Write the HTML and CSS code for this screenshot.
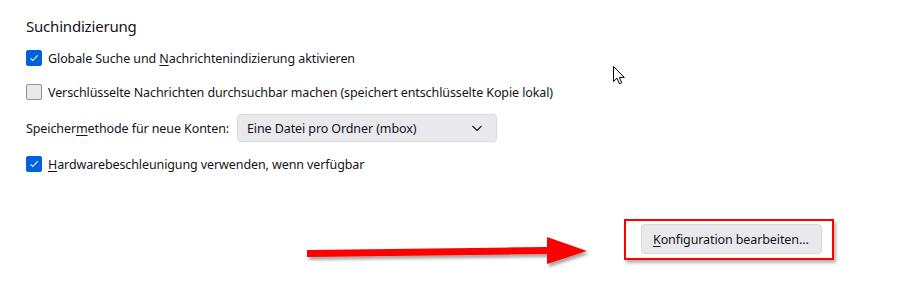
FILE: index.html
```html
<!DOCTYPE html>
<html lang="de">
<head>
<meta charset="utf-8">
<title>Suchindizierung</title>
<link rel="stylesheet" href="styles.css">
</head>
<body>
<main class="pane">
  <h2 class="pane-title">Suchindizierung</h2>

  <label class="check-row">
    <span class="box checked"><svg viewBox="0 0 16 16"><path d="M4 8.3l2.6 2.6L12.2 5"/></svg></span>
    <span>Globale Suche und <u>N</u>achrichtenindizierung aktivieren</span>
  </label>

  <label class="check-row">
    <span class="box"></span>
    <span>Verschlüsselte Nachrichten durchsuchbar machen (speichert entschlüsselte Kopie lokal)</span>
  </label>

  <div class="select-row">
    <span>Speicher<u>m</u>ethode für neue Konten:</span>
    <div class="select">
      <span>Eine Datei pro Ordner (mbox)</span>
      <svg viewBox="0 0 12 12"><path d="M1.5 4l4.5 4.5L10.5 4"/></svg>
    </div>
  </div>

  <label class="check-row">
    <span class="box checked"><svg viewBox="0 0 16 16"><path d="M4 8.3l2.6 2.6L12.2 5"/></svg></span>
    <span><u>H</u>ardwarebeschleunigung verwenden, wenn verfügbar</span>
  </label>

  <div class="action-row">
    <div class="mark">
      <button class="btn"><u>K</u>onfiguration bearbeiten...</button>
    </div>
  </div>
</main>

<!-- Anmerkungen -->
<svg class="arrow" viewBox="0 0 300 40" width="300" height="40">
  <defs>
    <filter id="sh" x="-5%" y="-30%" width="115%" height="180%">
      <feDropShadow dx="2" dy="3" stdDeviation="1.6" flood-color="#000" flood-opacity=".35"/>
    </filter>
  </defs>
  <path filter="url(#sh)" fill="#ff0000" d="M7 20 L247 17 L247 7 L287 21 L247 34 L247 24 L7 27 Z"/>
</svg>

<svg class="cursor" viewBox="0 0 13 20" width="13" height="20">
  <path d="M0.5 0.5 L0.5 15.5 L4 12.2 L6.4 17.8 L8.7 16.8 L6.4 11.4 L11.3 11.4 Z" fill="#fff" stroke="#000" stroke-width="1"/>
</svg>
</body>
</html>
```
FILE: styles.css
```css
/* ==== リセット ==== */
*,*::before,*::after{box-sizing:border-box}
html,body{margin:0;padding:0;background:#fff;width:923px;height:303px;overflow:hidden}
body{font-family:"Noto Sans","Open Sans",sans-serif;font-size:12.5px;color:#15141a;position:relative}
u{text-decoration-thickness:1px;text-underline-offset:2px}

/* ==== 本体 ==== */
.pane{padding:15px 0 0 26px;display:flex;flex-direction:column}
.pane-title{margin:0 0 4px;font-size:15px;font-weight:400;line-height:22px;letter-spacing:-.2px}

.check-row{display:flex;align-items:center;gap:6px;height:34px;letter-spacing:-.1px}
.box{width:16px;height:16px;border:1px solid #8f8f9d;border-radius:2px;background:#e9e9ed;
     display:flex;align-items:center;justify-content:center}
.box.checked{background:#0061e0;border-color:#0061e0}
.box svg{width:16px;height:16px;fill:none;stroke:#fff;stroke-width:1.2}

.select-row{display:flex;align-items:center;gap:8px;height:38px;letter-spacing:-.1px}
.select{width:260px;height:28px;background:#e9e9ed;border:1px solid #d9d9dd;border-radius:4px;
        display:flex;align-items:center;justify-content:space-between;padding:0 13px 0 9px}
.select svg{width:12px;height:12px;fill:none;stroke:#15141a;stroke-width:1.1}

/* ==== ボタン ==== */
.action-row{display:flex;padding:38px 0 0 598px}
.mark{border:2px solid #ff0000;padding:3px 10px 4px 15px;box-shadow:2px 3px 3px rgba(0,0,0,.3)}
.btn{font:inherit;letter-spacing:-.1px;color:#15141a;background:#e9e9ed;border:1px solid #d9d9dd;
     border-radius:4px;height:30px;padding:0 11px;width:181px;white-space:nowrap;text-align:left}

/* ==== 注釈 ==== */
.arrow{position:absolute;left:300px;top:230px}
.cursor{position:absolute;left:613px;top:66px}
```
